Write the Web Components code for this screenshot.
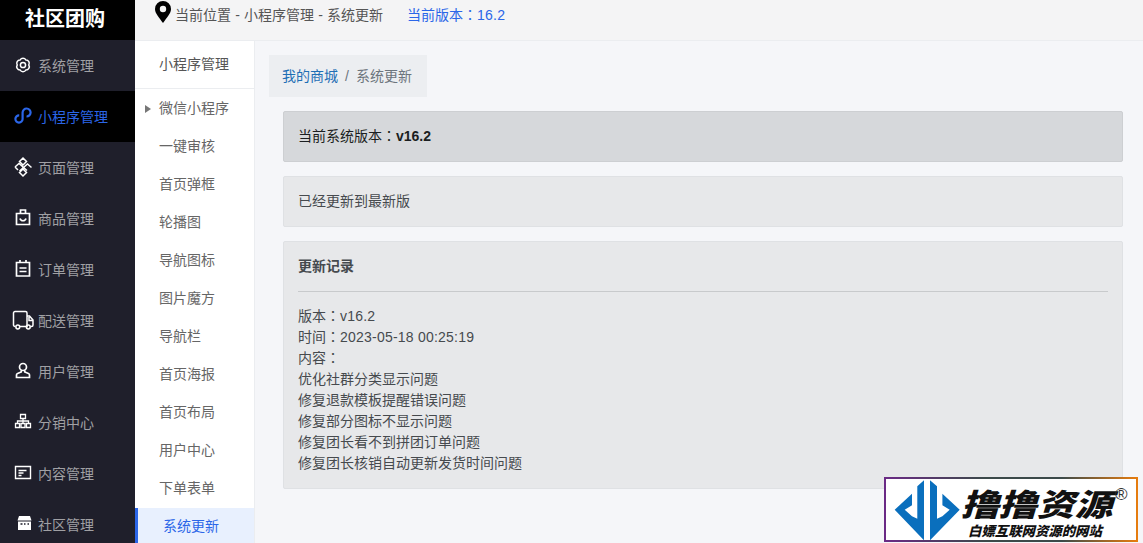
<!DOCTYPE html>
<html lang="zh">
<head>
<meta charset="utf-8">
<title>系统更新</title>
<style>
  html, body { margin: 0; height: 100%; overflow: hidden; }
  body { font-family: "Liberation Sans", "Noto Sans CJK SC", sans-serif; font-size: 14px; color: #495057; background: #f5f6f9; }
  /* los dos puntos centrados del original */
  .c { font-family: "Noto Sans CJK TC", sans-serif; line-height: 0; }
  .n { letter-spacing: .22px; }
</style>
</head>
<body>

<app-shell>
  <side-nav slot="nav">
    <nav-item icon="gear">系统管理</nav-item>
    <nav-item icon="link" active>小程序管理</nav-item>
    <nav-item icon="page">页面管理</nav-item>
    <nav-item icon="bag">商品管理</nav-item>
    <nav-item icon="note">订单管理</nav-item>
    <nav-item icon="truck">配送管理</nav-item>
    <nav-item icon="user">用户管理</nav-item>
    <nav-item icon="tree">分销中心</nav-item>
    <nav-item icon="card">内容管理</nav-item>
    <nav-item icon="shop">社区管理</nav-item>
  </side-nav>

  <top-bar slot="top" version="16.2">当前位置 - 小程序管理 - 系统更新</top-bar>

  <sub-menu slot="sub" heading="小程序管理">
    <sub-item arrow>微信小程序</sub-item>
    <sub-item>一键审核</sub-item>
    <sub-item>首页弹框</sub-item>
    <sub-item>轮播图</sub-item>
    <sub-item>导航图标</sub-item>
    <sub-item>图片魔方</sub-item>
    <sub-item>导航栏</sub-item>
    <sub-item>首页海报</sub-item>
    <sub-item>首页布局</sub-item>
    <sub-item>用户中心</sub-item>
    <sub-item>下单表单</sub-item>
    <sub-item selected>系统更新</sub-item>
  </sub-menu>

  <bread-crumb home="我的商城" current="系统更新"></bread-crumb>

  <info-panel tone="dark">当前系统版本<span class="c" lang="zh-TW">：</span><b>v16.2</b></info-panel>
  <info-panel>已经更新到最新版</info-panel>
  <info-panel heading="更新记录">
    <div>版本<span class="c" lang="zh-TW">：</span><span class="n">v16.2</span></div>
    <div>时间<span class="c" lang="zh-TW">：</span><span class="n">2023-05-18 00:25:19</span></div>
    <div>内容<span class="c" lang="zh-TW">：</span></div>
    <div>优化社群分类显示问题</div>
    <div>修复退款模板提醒错误问题</div>
    <div>修复部分图标不显示问题</div>
    <div>修复团长看不到拼团订单问题</div>
    <div>修复团长核销自动更新发货时间问题</div>
  </info-panel>
</app-shell>

<water-mark></water-mark>

<script>
const ICONS = {
  gear: '<path stroke-width="1.500" d="M14.800 10A3.300 3.300 0 0 1 11.900 15A3.300 3.300 0 0 1 6.100 15A3.300 3.300 0 0 1 3.200 10A3.300 3.300 0 0 1 6.100 5A3.300 3.300 0 0 1 11.900 5A3.300 3.300 0 0 1 14.800 10z"/><circle stroke-width="1.500" cx="9" cy="10" r="2.600"/>',
  link: '<path stroke-width="2.200" d="M12.500 10.500A4 4 0 1 0 8.600 6.500V13A3.600 3.600 0 1 1 5.200 9.400"/>',
  page: '<path stroke-width="1.500" d="M9 1l3.500 3.500L9 8 5.500 4.500zM9 12l3.500 3.500L9 19l-3.500-3.500zM1 10l4-3.500 8 7M17.500 10.500L13.500 7l-8 7M1 10l3 3"/>',
  bag: '<path d="M2.500 5.500h13v11h-13zM6.500 5.500V2h5v3.500"/><path d="M6 10.500c1 3 5 3 6 0"/>',
  note: '<path d="M2.500 3.500h13v13.500h-13zM6 1v3M12 1v3M5.500 9h7M5.500 12.500h7"/>',
  truck: '<path stroke-width="1.500" d="M1.500 16.500H1A1.500 1.500 0 0 1-.5 15V3A1.500 1.500 0 0 1 1 1.500h10.500A1.500 1.500 0 0 1 13 3v13.500H6"/><path stroke-width="1.500" d="M13 6h2.500l3.500 4v5a1.500 1.500 0 0 1-1.500 1.500H16.500M15 7v3.500h3.500"/><circle stroke-width="1.500" cx="3.800" cy="17" r="1.900"/><circle stroke-width="1.500" cx="14.300" cy="17" r="1.900"/>',
  user: '<circle cx="9" cy="6" r="3.500"/><path d="M7.200 9.500V11L3.500 12.500a1.500 1.500 0 0 0-1 1.500v2.500h13V14a1.500 1.500 0 0 0-1-1.500L10.800 11V9.500"/>',
  tree: '<path stroke-width="1.300" d="M6.500 2.500h5v4h-5zM1.500 11.500h4v4h-4zM7 11.500h4v4H7zM12.500 11.500h4v4h-4zM9 6.500v5M3.500 11.500V9h11v2.500"/>',
  card: '<path stroke-width="1.400" d="M1.500 3.500h15v12h-15z"/><path stroke-width="1.300" d="M4.500 7.500h8M4.500 10h5M4.500 12.500h3"/>',
  shop: '<path stroke="none" fill="#fff" d="M5 2h11l1.500 4.500h-14z"/><path stroke="none" fill="#fff" d="M4 7.500h13V16H4z"/><path stroke="#1f1f2b" stroke-width="1.500" d="M6.500 10h2M10 10h1.500M13.500 10h1.500"/>'
};

class AppShell extends HTMLElement {
  constructor() {
    super();
    this.attachShadow({ mode: "open" });
    this.shadowRoot.innerHTML = `
      <style>
        :host { display: grid; grid-template-columns: 135px 1fr; height: 100vh; overflow: hidden; }
        .right { display: flex; flex-direction: column; min-width: 0; height: 100vh; }
        .below { display: flex; flex: 1; min-height: 0; }
        .content { flex: 1; display: flex; flex-direction: column; gap: 14px; padding: 14px 20px 0 14px; min-width: 0; }
      </style>
      <slot name="nav"></slot>
      <div class="right">
        <slot name="top"></slot>
        <div class="below">
          <slot name="sub"></slot>
          <div class="content"><slot></slot></div>
        </div>
      </div>`;
  }
}
customElements.define("app-shell", AppShell);

class SideNav extends HTMLElement {
  constructor() {
    super();
    this.attachShadow({ mode: "open" });
    this.shadowRoot.innerHTML = `
      <style>
        :host { display: block; background: #1f1f2b; height: 100vh; overflow: hidden; }
        .logo { height: 40px; background: #000; color: #fff; font-size: 20px; font-weight: 700; line-height: 38px; text-align: center; padding-right: 5px; box-sizing: border-box; }
      </style>
      <div class="logo">社区团购</div>
      <slot></slot>`;
  }
}
customElements.define("side-nav", SideNav);

class NavItem extends HTMLElement {
  constructor() {
    super();
    this.attachShadow({ mode: "open" });
    const active = this.hasAttribute("active");
    this.shadowRoot.innerHTML = `
      <style>
        :host { display: flex; align-items: center; height: 51px; padding: 0 0 2px 14px; box-sizing: border-box;
                color: ${active ? "#2b66e8" : "#a0a0a4"}; background: ${active ? "#000" : "transparent"}; font-size: 14px; }
        svg { width: 20px; height: 20px; margin-right: 4px; fill: none; stroke: ${active ? "#2b66e8" : "#fff"}; stroke-width: 1.700; flex: none; overflow: visible; }
      </style>
      <svg viewBox="0 0 20 20">${ICONS[this.getAttribute("icon")] || ""}</svg>
      <span><slot></slot></span>`;
  }
}
customElements.define("nav-item", NavItem);

class TopBar extends HTMLElement {
  constructor() {
    super();
    this.attachShadow({ mode: "open" });
    this.shadowRoot.innerHTML = `
      <style>
        :host { display: flex; align-items: flex-start; height: 41px; box-sizing: border-box; background: #f4f4f5; border-bottom: 1px solid #ebedf0; padding: 0 0 0 20px; color: #555; }
        svg { width: 16px; height: 24px; margin-right: 4px; flex: none; }
        .where { line-height: 30px; word-spacing: .3px; }
        .ver { line-height: 30px; margin-left: 24px; color: #2b66e8; }
        .c { font-family: "Noto Sans CJK TC", sans-serif; line-height: 0; }
        .n { letter-spacing: .22px; }
      </style>
      <svg viewBox="0 0 16 24"><path fill-rule="evenodd" fill="#000" d="M8 1a8 8 0 0 1 8 8c0 4.500-4.500 9-8 14C4.500 18 0 13.500 0 9a8 8 0 0 1 8-8zm0 4.800a3.200 3.200 0 1 0 0 6.400 3.200 3.200 0 0 0 0-6.400z"/></svg>
      <span class="where"><slot></slot></span>
      <span class="ver">当前版本<span class="c" lang="zh-TW">：</span><span class="n">${this.getAttribute("version")}</span></span>`;
  }
}
customElements.define("top-bar", TopBar);

class SubMenu extends HTMLElement {
  constructor() {
    super();
    this.attachShadow({ mode: "open" });
    this.shadowRoot.innerHTML = `
      <style>
        :host { display: block; width: 120px; flex: none; box-sizing: border-box; background: #fff; border-right: 1px solid #ebedf0; overflow: hidden; }
        .head { height: 48px; line-height: 46px; border-bottom: 1px solid #ebedf0; box-sizing: border-box; padding-left: 24px; color: #555; }
      </style>
      <div class="head">${this.getAttribute("heading")}</div>
      <slot></slot>`;
  }
}
customElements.define("sub-menu", SubMenu);

class SubItem extends HTMLElement {
  constructor() {
    super();
    this.attachShadow({ mode: "open" });
    const on = this.hasAttribute("selected");
    this.shadowRoot.innerHTML = `
      <style>
        :host { display: block; position: relative; box-sizing: border-box;
                height: ${on ? "37px" : "38px"}; line-height: ${on ? "36px" : "38px"}; margin-top: ${on ? "1px" : "0"};
                padding-left: ${on ? "25px" : "24px"}; color: ${on ? "#2b66e8" : "#666"};
                background: ${on ? "#e8f0fe" : "transparent"}; border-left: ${on ? "3px solid #2b66e8" : "0"}; }
        i { position: absolute; left: 10px; top: 16px; border-left: 6px solid #777; border-top: 4px solid transparent; border-bottom: 4px solid transparent; }
      </style>
      ${this.hasAttribute("arrow") ? "<i></i>" : ""}<slot></slot>`;
  }
}
customElements.define("sub-item", SubItem);

class BreadCrumb extends HTMLElement {
  constructor() {
    super();
    this.attachShadow({ mode: "open" });
    this.shadowRoot.innerHTML = `
      <style>
        :host { display: block; width: 158px; box-sizing: border-box; height: 42px; line-height: 42px; padding: 0 13px; background: #eceef1; color: #6c757d; }
        a { color: #1f6fb5; text-decoration: none; }
        span { margin: 0 7px; }
      </style>
      <a>${this.getAttribute("home")}</a><span>/</span>${this.getAttribute("current")}`;
  }
}
customElements.define("bread-crumb", BreadCrumb);

class InfoPanel extends HTMLElement {
  constructor() {
    super();
    this.attachShadow({ mode: "open" });
    const dark = this.getAttribute("tone") === "dark";
    const heading = this.getAttribute("heading");
    this.shadowRoot.innerHTML = `
      <style>
        :host { display: block; margin-left: 14px; box-sizing: border-box; padding: 14px; border: 1px solid ${dark ? "#cdcfd2" : "#dfe1e4"}; border-radius: 2px;
                background: ${dark ? "#d6d8db" : "#e7e8ea"}; color: ${dark ? "#1b1e21" : "#464a4e"}; line-height: 21px; }
        h4 { margin: 0 0 14px; padding: 0 0 14px; font-size: 14px; font-weight: 700; line-height: 21px; border-bottom: 1px solid #c8cacc; }
      </style>
      ${heading ? `<h4>${heading}</h4>` : ""}<slot></slot>`;
  }
}
customElements.define("info-panel", InfoPanel);

class WaterMark extends HTMLElement {
  constructor() {
    super();
    this.attachShadow({ mode: "open" });
    this.shadowRoot.innerHTML = `
      <style>
        :host { position: fixed; left: 884px; top: 477px; width: 254px; height: 65px; box-sizing: border-box; padding: 2px;
                background: linear-gradient(90deg, #6b2a86 0%, #3c4a4a 40%, #3c4a4a 70%, #e87d0e 100%); }
        .in { position: relative; height: 100%; background: #fff; overflow: hidden; font-family: "Noto Sans CJK SC", sans-serif; color: #111; }
        svg { position: absolute; left: 8px; top: 1px; width: 66px; height: 61px; }
        .big { position: absolute; left: 75px; top: 7px; font-size: 31px; line-height: 34px; font-weight: 900; font-style: italic; white-space: nowrap; transform: scaleX(1.220); transform-origin: left center; }
        .small { position: absolute; left: 82px; top: 43px; font-size: 13.400px; line-height: 16px; font-weight: 900; font-style: italic; white-space: nowrap; }
        .r { position: absolute; left: 229px; top: 7px; font: 17px/18px "Liberation Sans", sans-serif; color: #333; }
      </style>
      <div class="in">
        <svg viewBox="0 0 66 61">
          <path fill="#0a6fbd" d="M30 .3L23.300 6.300V38.700L18 36.300L10.700 29.700L18 25.300V13.700L.7 29.700L30 60.300z"/>
          <path fill="#0a6fbd" d="M36 .3L43 6.300V38.700L48.400 36.300L55.700 29.700L48.400 25.300V13.700L65.700 29.700L36 60.300z"/>
        </svg>
        <div class="big">撸撸资源</div>
        <div class="small">白嫖互联网资源的网站</div>
        <div class="r">®</div>
      </div>`;
  }
}
customElements.define("water-mark", WaterMark);
</script>
</body>
</html>
